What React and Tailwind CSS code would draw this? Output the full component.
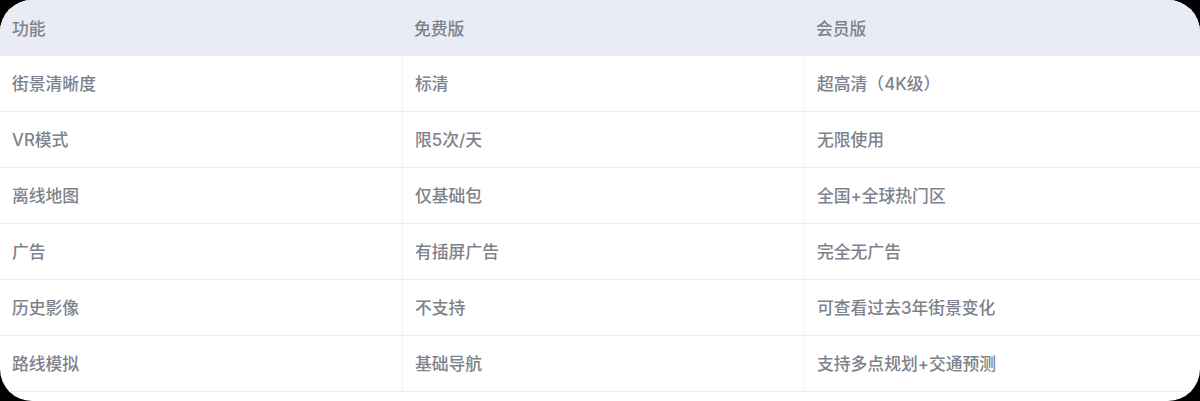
import React from "react";

const rows = [
  ["街景清晰度", "标清", "超高清（4K级）"],
  ["VR模式", "限5次/天", "无限使用"],
  ["离线地图", "仅基础包", "全国+全球热门区"],
  ["广告", "有插屏广告", "完全无广告"],
  ["历史影像", "不支持", "可查看过去3年街景变化"],
  ["路线模拟", "基础导航", "支持多点规划+交通预测"],
];

export default function App() {
  return (
    <div className="w-[1200px] h-[401px] bg-black">
      <div
        className="w-full h-full bg-white rounded-[32px] overflow-hidden text-[16.8px] font-medium text-[#7d828c]"
        style={{ fontFamily: '"Inter", "Noto Sans CJK SC", sans-serif' }}
      >
        <div className="grid grid-cols-[402px_402px_1fr] h-[56px] bg-[#e9ecf5] items-center pt-[3px]">
          <div className="px-3">功能</div>
          <div className="px-3">免费版</div>
          <div className="px-3">会员版</div>
        </div>
        {rows.map((r, i) => (
          <div
            key={i}
            className="grid grid-cols-[402px_402px_1fr] h-[56px] border-b border-[#ececef]"
          >
            <div className="px-3 pt-[3px] flex items-center">{r[0]}</div>
            <div className="px-3 pt-[3px] flex items-center border-l border-[#f3f4f6]">{r[1]}</div>
            <div className="px-3 pt-[3px] flex items-center border-l border-[#f3f4f6]">{r[2]}</div>
          </div>
        ))}
      </div>
    </div>
  );
}
